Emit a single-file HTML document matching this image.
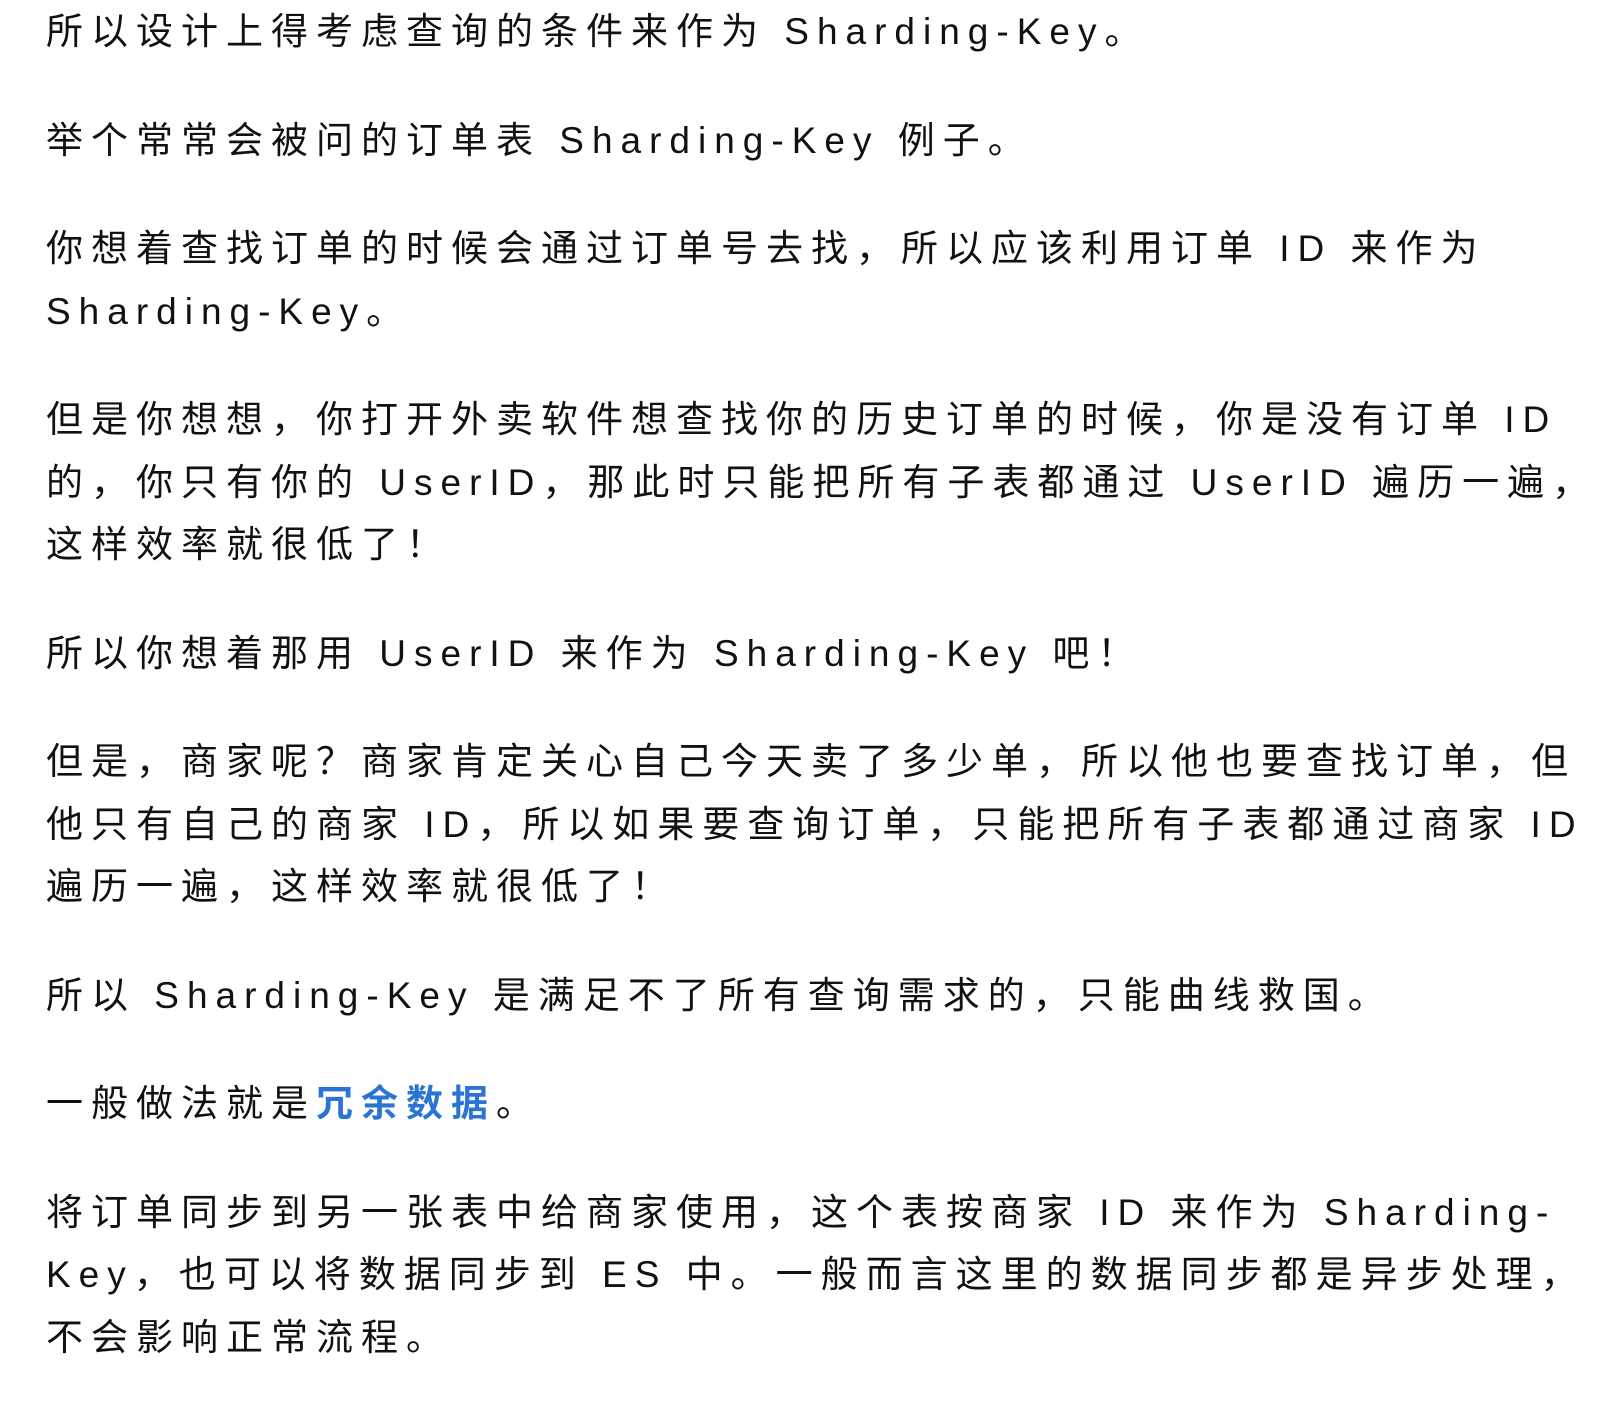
<!DOCTYPE html>
<html><head><meta charset="utf-8"><style>
html,body{margin:0;padding:0;background:#fff;}
body{width:1618px;height:1376px;overflow:hidden;}
.w{position:absolute;left:46px;top:1px;font-family:"Liberation Sans","Noto Sans CJK SC",sans-serif;font-size:37px;line-height:62.5px;letter-spacing:8px;color:#111;white-space:nowrap;}
p{margin:0 0 46px 0;}
.b{color:#2b74d4;font-weight:bold;}
</style></head><body><div class="w">
<p>所以设计上得考虑查询的条件来作为 Sharding-Key。</p>
<p>举个常常会被问的订单表 Sharding-Key 例子。</p>
<p>你想着查找订单的时候会通过订单号去找，所以应该利用订单 ID 来作为<br>Sharding-Key。</p>
<p>但是你想想，你打开外卖软件想查找你的历史订单的时候，你是没有订单 ID<br>的，你只有你的 UserID，那此时只能把所有子表都通过 UserID 遍历一遍，<br>这样效率就很低了！</p>
<p>所以你想着那用 UserID 来作为 Sharding-Key 吧！</p>
<p>但是，商家呢？商家肯定关心自己今天卖了多少单，所以他也要查找订单，但<br>他只有自己的商家 ID，所以如果要查询订单，只能把所有子表都通过商家 ID<br>遍历一遍，这样效率就很低了！</p>
<p>所以 Sharding-Key 是满足不了所有查询需求的，只能曲线救国。</p>
<p>一般做法就是<span class="b">冗余数据</span>。</p>
<p>将订单同步到另一张表中给商家使用，这个表按商家 ID 来作为 Sharding-<br>Key，也可以将数据同步到 ES 中。一般而言这里的数据同步都是异步处理，<br>不会影响正常流程。</p>
</div></body></html>
